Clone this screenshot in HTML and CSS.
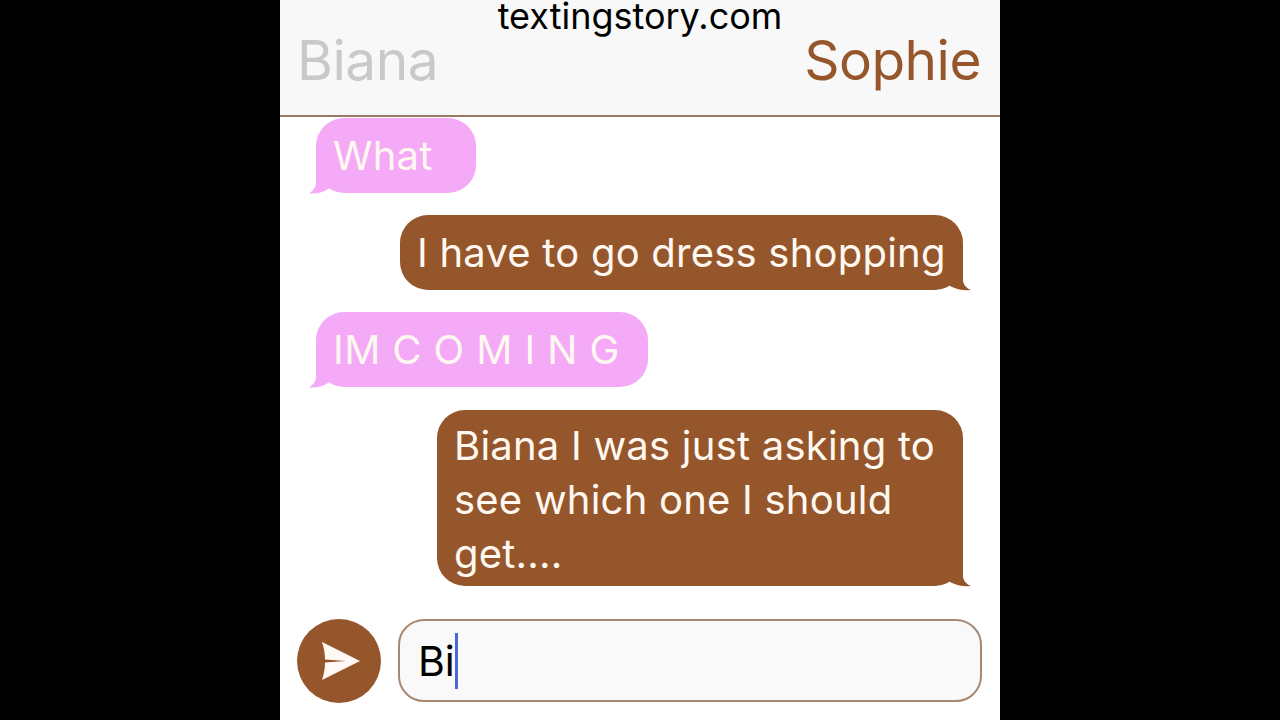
FILE: index.html
```html
<!DOCTYPE html>
<html lang="en">
<head>
    <meta charset="UTF-8">
    <meta name="viewport" content="width=device-width, initial-scale=1.0">
    <title>Texting Story</title>
    <link rel="stylesheet" href="styles.css">
</head>
<body>

    <div class="phone">
        <div class="watermark">textingstory.com</div>

        <div class="header">
            <span class="name name-left">Biana</span>
            <span class="name name-right">Sophie</span>
        </div>

        <div class="messages">
            <div class="bubble bubble-left bubble-what">What
                <svg class="tail tail-left" viewBox="0 0 24 30"><path d="M7 0 L7 19 C7 23 4 27 0 29.5 C7 30 14 28.5 19 25 L24 14 L24 0 Z"/></svg>
            </div>
            <div class="bubble bubble-right bubble-short">I have to go dress shopping
                <svg class="tail tail-right" viewBox="0 0 24 30"><path d="M15 0 L15 19 C15 23 18 27 23 29 C17 30 8 28.5 2 25 L0 14 L0 0 Z"/></svg>
            </div>
            <div class="bubble bubble-left bubble-coming">IM C O M I N G
                <svg class="tail tail-left" viewBox="0 0 24 30"><path d="M7 0 L7 19 C7 23 4 27 0 29.5 C7 30 14 28.5 19 25 L24 14 L24 0 Z"/></svg>
            </div>
            <div class="bubble bubble-right bubble-long">Biana I was just asking to see which one I should get....
                <svg class="tail tail-right" viewBox="0 0 24 30"><path d="M15 0 L15 19 C15 23 18 27 23 29 C17 30 8 28.5 2 25 L0 14 L0 0 Z"/></svg>
            </div>
        </div>

        <div class="composer">
            <div class="send-btn">
                <svg class="send-icon" viewBox="0 0 38 38" width="38" height="38">
                    <path d="M0 0 L38 19 L0 38 C2 32 3 26 3 20.5 L24 19 L3 17.5 C3 12 2 6 0 0 Z"/>
                </svg>
            </div>
            <div class="input-box">
                <span class="typed">Bi</span><span class="caret"></span>
            </div>
        </div>
    </div>

</body>
</html>
```

FILE: styles.css
```css
html, body {
    height: 100%;
}
body {
    margin: 0;
    background-color: #000;
    font-family: Inter, "Liberation Sans", sans-serif;
    overflow: hidden;
}
.phone {
    position: relative;
    width: 720px;
    height: 720px;
    margin: 0 auto;
    background-color: #fff;
    display: flex;
    flex-direction: column;
}
.watermark {
    position: absolute;
    top: 0;
    left: 0;
    right: 0;
    text-align: center;
    font-size: 36px;
    line-height: 33px;
    color: #000;
}
.header {
    height: 117px;
    flex-shrink: 0;
    box-sizing: border-box;
    padding: 30px 19px 0 17px;
    display: flex;
    justify-content: space-between;
    background-color: #f8f8f8;
    border-bottom: 2px solid #9c7a60;
}
.name {
    font-size: 55px;
    line-height: 60px;
    letter-spacing: -0.5px;
}
.name-left {
    color: #c9c9c9;
}
.name-right {
    color: #96562c;
}
.messages {
    flex: 1;
    min-height: 0;
    padding: 1px 37px 0 36px;
    display: flex;
    flex-direction: column;
    gap: 22px;
}
.bubble {
    position: relative;
    box-sizing: border-box;
    padding: 11px 17px 10px;
    border-radius: 28px;
    font-size: 40px;
    line-height: 54px;
    letter-spacing: 0.22px;
    color: #fff8f0;
}
.bubble-left {
    align-self: flex-start;
    background-color: #f4aaf6;
}
.bubble-what {
    width: 160px;
}
.bubble-coming {
    width: 332px;
    letter-spacing: 0.4px;
}
.bubble-right {
    align-self: flex-end;
    background-color: #96562c;
}
.bubble-short {
    width: 563px;
    white-space: nowrap;
}
.bubble-long {
    width: 526px;
    margin-top: 1px;
    padding-top: 9px;
    padding-bottom: 5px;
}
.tail {
    position: absolute;
    bottom: -1px;
    width: 24px;
    height: 30px;
}
.tail-left {
    left: -7px;
    fill: #f4aaf6;
}
.tail-right {
    right: -9px;
    fill: #96562c;
}
.composer {
    height: 84px;
    flex-shrink: 0;
    margin-bottom: 17px;
    padding: 0 18px 0 17px;
    display: flex;
    gap: 17px;
}
.send-btn {
    width: 84px;
    height: 84px;
    flex-shrink: 0;
    border-radius: 50%;
    background-color: #96562c;
    display: flex;
    align-items: center;
    justify-content: center;
}
.send-icon {
    margin-left: 4px;
    fill: #fffaf5;
}
.input-box {
    flex: 1;
    box-sizing: border-box;
    height: 83px;
    padding-left: 18px;
    display: flex;
    align-items: center;
    background-color: #faf9f9;
    border: 2px solid #a98872;
    border-radius: 26px;
}
.typed {
    font-size: 41px;
    color: #000;
}
.caret {
    width: 3px;
    height: 56px;
    background-color: #4a66d8;
}
```
